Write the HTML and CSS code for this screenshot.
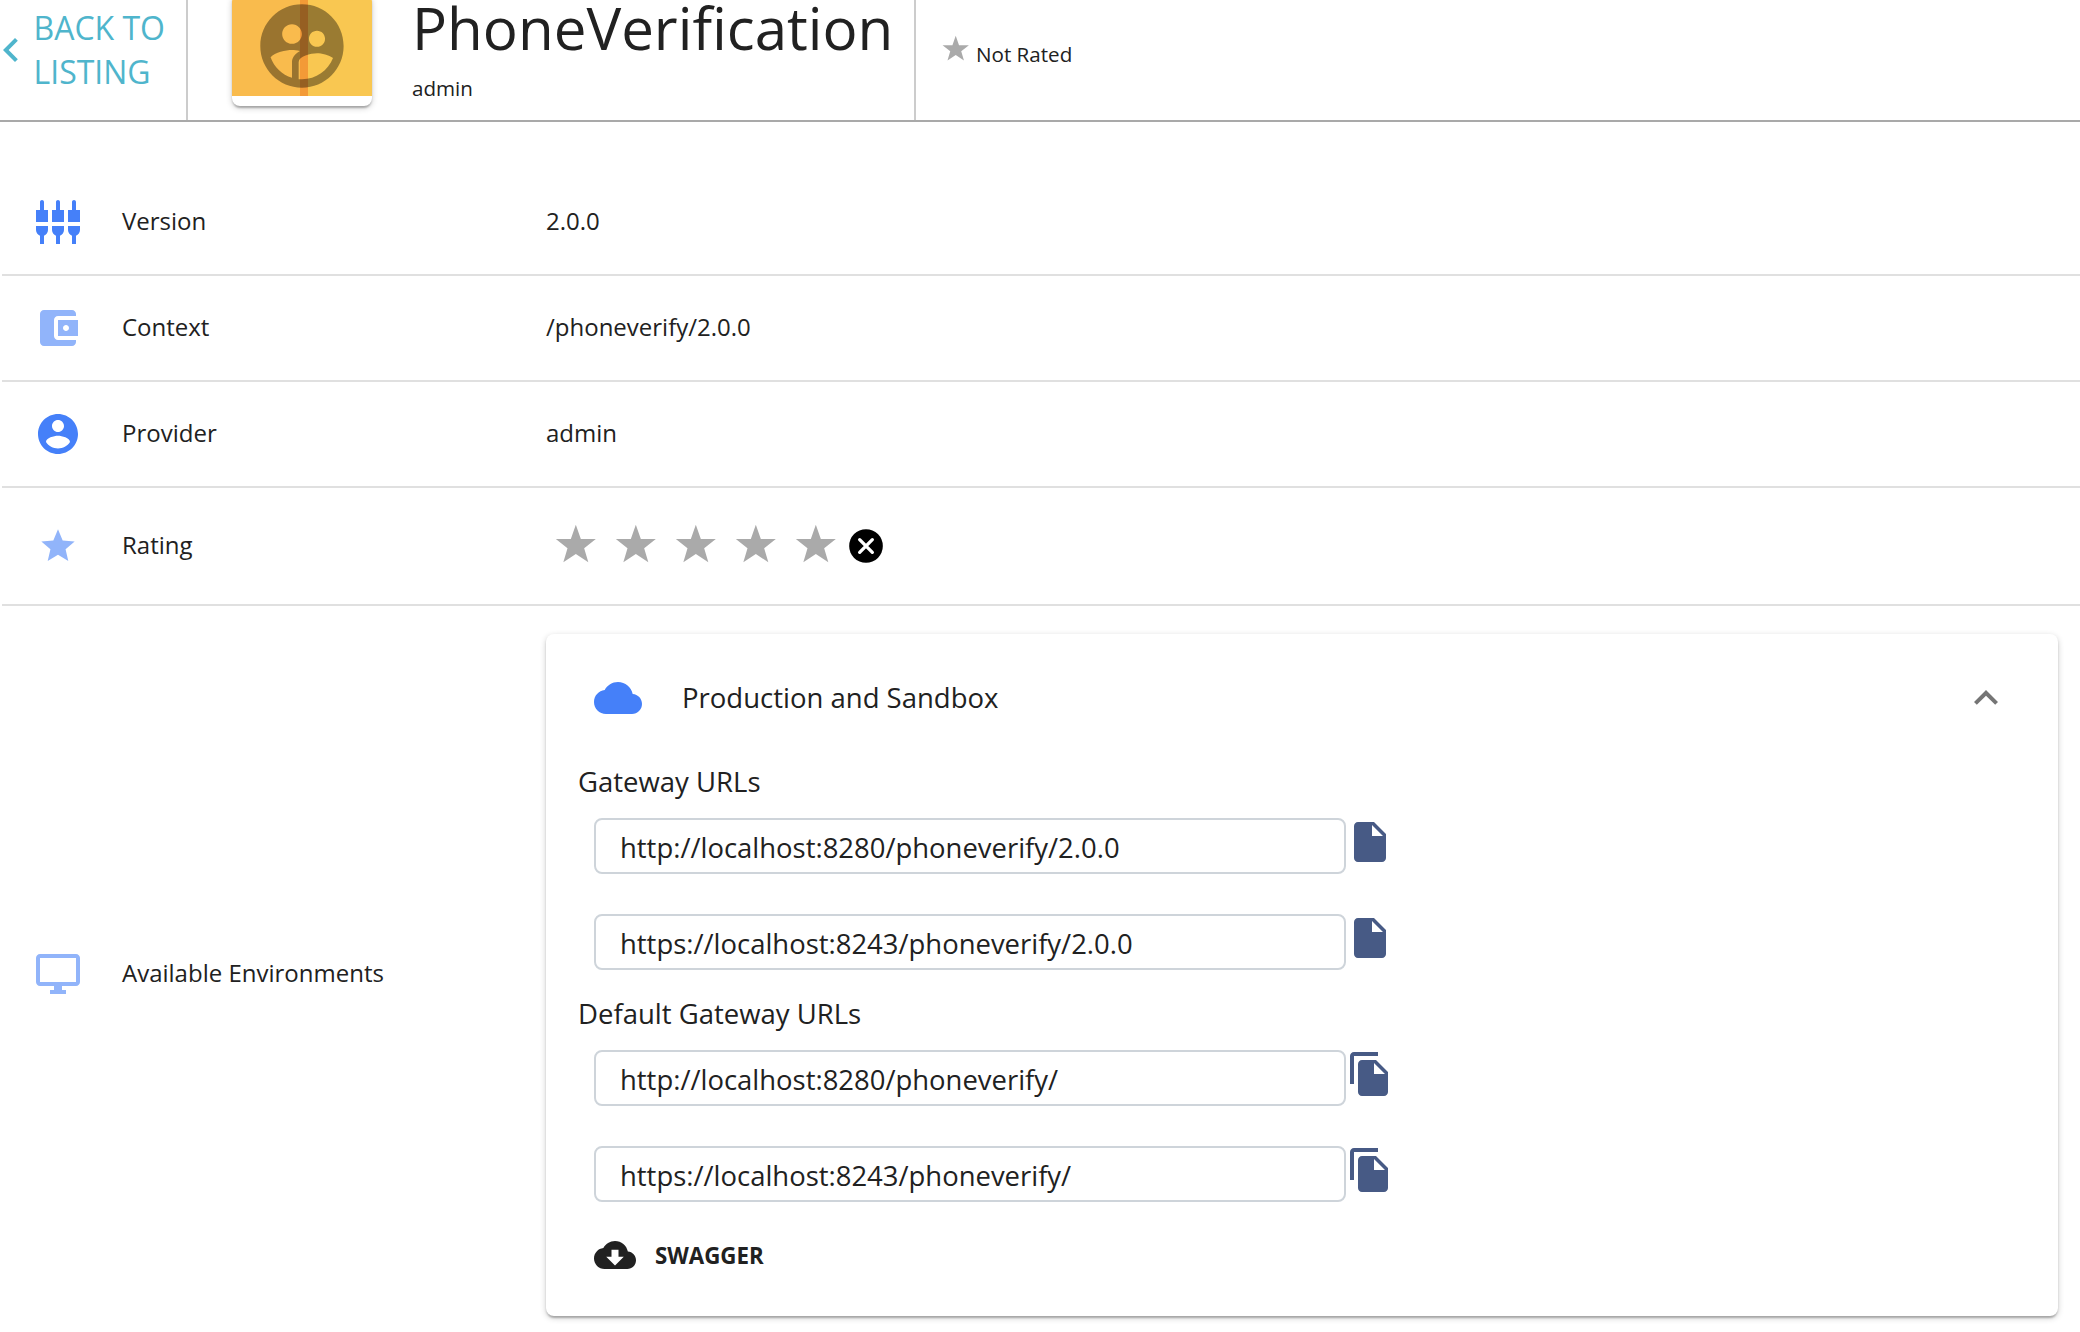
FILE: index.html
```html
<!DOCTYPE html>
<html lang="en">
<head>
<meta charset="utf-8">
<title>PhoneVerification</title>
<link rel="stylesheet" href="styles.css">
</head>
<body>
<svg class="defs" width="0" height="0">
  <symbol id="star" viewBox="0 0 51 48"><path d="m25,1 6,17h18l-14,11 5,17-15-10-15,10 5-17-14-11h18z"/></symbol>
  <symbol id="file" viewBox="0 0 24 24"><path d="M6 2c-1.1 0-1.99.9-1.99 2L4 20c0 1.1.89 2 1.99 2H18c1.1 0 2-.9 2-2V8l-6-6H6zm7 7V3.500L18.500 9H13z"/></symbol>
  <symbol id="copy" viewBox="0 0 24 24"><path d="M16 1H4c-1.100 0-2 .9-2 2v14h2V3h12V1zm-1 4l6 6v10c0 1.100-.9 2-2 2H7.990C6.890 23 6 22.100 6 21l.01-14c0-1.100.89-2 1.990-2h7zm-1 7h5.500L14 6.500V12z"/></symbol>
</svg>
<header class="header">
  <a class="back">
    <svg class="back-icon" viewBox="0 0 24 24"><path d="M15.410 16.090l-4.580-4.590 4.580-4.590L14 5.500l-6 6 6 6z"/></svg>
    <span class="back-text">BACK TO<br>LISTING</span>
  </a>
  <div class="summary">
    <div class="thumb">
      <div class="thumb-art">
        <svg class="thumb-icon" viewBox="0 0 24 24"><path d="M11.990 2c-5.520 0-10 4.480-10 10s4.480 10 10 10 10-4.480 10-10-4.480-10-10-10zm3.610 6.340c1.070 0 1.930.86 1.930 1.930 0 1.070-.86 1.930-1.930 1.930-1.070 0-1.930-.86-1.930-1.930-.01-1.070.86-1.930 1.930-1.930zm-6-1.580c1.300 0 2.360 1.060 2.360 2.360 0 1.300-1.060 2.360-2.360 2.360s-2.360-1.060-2.360-2.360c0-1.310 1.050-2.360 2.360-2.360zm0 9.130v3.750c-2.400-.75-4.300-2.600-5.140-4.960 1.050-1.120 3.670-1.690 5.140-1.690.53 0 1.200.08 1.900.22-1.640.87-1.900 2.020-1.900 2.680zM11.990 20c-.27 0-.53-.01-.79-.04v-4.070c0-1.420 2.940-2.130 4.400-2.130 1.070 0 2.920.39 3.840 1.150-1.170 2.970-4.060 5.090-7.450 5.090z"/></svg>
      </div>
    </div>
    <div class="names">
      <h1 class="title">PhoneVerification</h1>
      <div class="owner">admin</div>
    </div>
  </div>
  <div class="rated">
    <svg class="rated-star"><use href="#star"/></svg>
    <span class="rated-text">Not Rated</span>
  </div>
</header>
<main class="table">
  <div class="row">
    <svg class="icon" viewBox="0 0 24 24"><path d="M5 2c0-.55-.45-1-1-1s-1 .45-1 1v4H1v6h6V6H5V2zm4 14c0 1.300.84 2.400 2 2.820V23h2v-4.180c1.160-.41 2-1.510 2-2.820v-2H9v2zm-8 0c0 1.300.84 2.400 2 2.820V23h2v-4.180C6.160 18.400 7 17.300 7 16v-2H1v2zM21 6V2c0-.55-.45-1-1-1s-1 .45-1 1v4h-2v6h6V6h-2zm-8-4c0-.55-.45-1-1-1s-1 .45-1 1v4H9v6h6V6h-2V2zm4 14c0 1.300.84 2.400 2 2.820V23h2v-4.180c1.160-.41 2-1.510 2-2.820v-2h-6v2z"/></svg>
    <span class="text">Version</span>
    <span class="text">2.0.0</span>
  </div>
  <div class="row">
    <svg class="icon light" viewBox="0 0 24 24"><path d="M21 18v1c0 1.100-.9 2-2 2H5c-1.110 0-2-.9-2-2V5c0-1.100.89-2 2-2h14c1.100 0 2 .9 2 2v1h-9c-1.110 0-2 .9-2 2v8c0 1.100.89 2 2 2h9zm-9-2h10V8H12v8zm4-2.500c-.83 0-1.500-.67-1.500-1.500s.67-1.500 1.500-1.500 1.500.67 1.500 1.500-.67 1.500-1.500 1.500z"/></svg>
    <span class="text">Context</span>
    <span class="text">/phoneverify/2.0.0</span>
  </div>
  <div class="row">
    <svg class="icon" viewBox="0 0 24 24"><path d="M12 2C6.480 2 2 6.480 2 12s4.480 10 10 10 10-4.480 10-10S17.520 2 12 2zm0 3c1.660 0 3 1.340 3 3s-1.340 3-3 3-3-1.340-3-3 1.340-3 3-3zm0 14.200c-2.500 0-4.710-1.280-6-3.220.03-1.990 4-3.080 6-3.080 1.990 0 5.970 1.090 6 3.080-1.290 1.940-3.500 3.220-6 3.220z"/></svg>
    <span class="text">Provider</span>
    <span class="text">admin</span>
  </div>
  <div class="row row-rating">
    <svg class="icon light small" viewBox="0 0 24 24"><path d="M12 17.270L18.180 21l-1.640-7.030L22 9.240l-7.190-.61L12 2 9.190 8.630 2 9.240l5.460 4.730L5.820 21z"/></svg>
    <span class="text">Rating</span>
    <div class="stars">
      <svg class="star"><use href="#star"/></svg>
      <svg class="star"><use href="#star"/></svg>
      <svg class="star"><use href="#star"/></svg>
      <svg class="star"><use href="#star"/></svg>
      <svg class="star"><use href="#star"/></svg>
      <svg class="cancel" viewBox="0 0 24 24"><circle cx="12" cy="12" r="10.100"/><path d="M8.200 8.200l7.600 7.600M15.800 8.200l-7.600 7.600"/></svg>
    </div>
  </div>
  <div class="row row-env">
    <svg class="icon light" viewBox="0 0 24 24"><path d="M21 2H3c-1.100 0-2 .9-2 2v12c0 1.100.9 2 2 2h7v2H8v2h8v-2h-2v-2h7c1.100 0 2-.9 2-2V4c0-1.100-.9-2-2-2zm0 14H3V4h18v12z"/></svg>
    <span class="text">Available Environments</span>
    <section class="card">
      <div class="card-head">
        <svg class="cloud" viewBox="0 0 24 24"><path d="M19.350 10.040C18.670 6.590 15.640 4 12 4 9.110 4 6.600 5.640 5.350 8.040 2.340 8.360 0 10.910 0 14c0 3.310 2.690 6 6 6h13c2.760 0 5-2.240 5-5 0-2.640-2.050-4.780-4.650-4.960z"/></svg>
        <span class="env-name">Production and Sandbox</span>
        <svg class="collapse" viewBox="0 0 24 24"><path d="M12 8l-6 6 1.410 1.410L12 10.830l4.590 4.580L18 14z"/></svg>
      </div>
      <h2 class="group">Gateway URLs</h2>
      <div class="urls">
        <div class="url"><div class="box">http://localhost:8280/phoneverify/2.0.0</div><svg class="action"><use href="#file"/></svg></div>
        <div class="url"><div class="box">https://localhost:8243/phoneverify/2.0.0</div><svg class="action"><use href="#file"/></svg></div>
      </div>
      <h2 class="group">Default Gateway URLs</h2>
      <div class="urls">
        <div class="url"><div class="box">http://localhost:8280/phoneverify/</div><svg class="action"><use href="#copy"/></svg></div>
        <div class="url"><div class="box">https://localhost:8243/phoneverify/</div><svg class="action"><use href="#copy"/></svg></div>
      </div>
      <a class="swagger">
        <svg class="download" viewBox="0 0 24 24"><path d="M19.350 10.040C18.670 6.590 15.640 4 12 4 9.110 4 6.600 5.640 5.350 8.040 2.340 8.360 0 10.910 0 14c0 3.310 2.690 6 6 6h13c2.760 0 5-2.240 5-5 0-2.640-2.050-4.780-4.650-4.960zM17 13l-5 5-5-5h3V9h4v4h3z"/></svg>
        <span class="swagger-text">SWAGGER</span>
      </a>
    </section>
  </div>
</main>
</body>
</html>
```
FILE: styles.css
```css
* { box-sizing: border-box; }
body {
  margin: 0;
  height: 1332px;
  overflow: hidden;
  background: #fff;
  color: #212121;
  font-family: "Open Sans", sans-serif;
  font-size: 24px;
}
svg { display: block; flex: none; }
.defs { position: absolute; }

.header {
  display: flex;
  height: 122px;
  border-bottom: 2px solid #a9a9a9;
}
.back {
  display: flex;
  width: 188px;
  flex: none;
  border-right: 2px solid #ccc;
  color: #4fb5cc;
}
.back-icon { width: 48px; height: 48px; margin: 27px -1px 0 -13.500px; fill: #4fb5cc; }
.back-text { font-size: 32px; line-height: 44px; padding-top: 6px; white-space: nowrap; }
.summary {
  display: flex;
  width: 728px;
  flex: none;
  border-right: 2px solid #ccc;
}
.thumb {
  width: 140px;
  height: 112px;
  margin: -6px 40px 0 44px;
  flex: none;
  border-radius: 8px;
  overflow: hidden;
  box-shadow: 0 2px 6px rgba(0,0,0,.2), 0 2px 2px rgba(0,0,0,.14), 0 4px 2px -2px rgba(0,0,0,.12);
}
.thumb-art {
  height: 102px;
  overflow: hidden;
  background: linear-gradient(to right, #f9bb4d 68px, #f39a37 68px 76px, #f9c751 76px);
}
.thumb-icon { width: 100px; height: 100px; margin: 2px 0 0 20px; fill: rgba(0,0,0,.38); }
.names { display: flex; flex-direction: column; }
.title { margin: 0; font-size: 58.300px; font-weight: 400; line-height: 56px; white-space: nowrap; }
.owner { font-size: 20.600px; line-height: 30px; margin-top: 17px; }
.rated { display: flex; padding-left: 26px; }
.rated-star { width: 28px; height: 27px; margin: 35px 6px 0 0; fill: #aaa; }
.rated-text { font-size: 20.600px; line-height: 30px; padding-top: 39px; }

.table { margin: 48px 0 0 2px; }
.row {
  display: grid;
  grid-template-columns: 88px 424px 1fr;
  align-items: center;
  height: 106px;
  padding-left: 32px;
  border-bottom: 2px solid #e0e0e0;
}
.row-rating { height: 118px; }
.row-env { height: 736px; border: 0; }
.icon { width: 48px; height: 48px; fill: #4580f9; }
.light { fill: #91b4fa; }
.small { width: 40px; height: 40px; margin-left: 4px; }
.text { line-height: 32px; padding-bottom: 2px; }

.stars { display: flex; align-items: center; gap: 17.500px; padding-left: 9px; }
.star { width: 42.500px; height: 40px; margin-top: -4px; fill: #aaa; }
.cancel { width: 40px; height: 40px; margin-left: -9px; fill: #000; }
.cancel path { stroke: #fff; stroke-width: 2px; stroke-linecap: round; }

.card {
  height: 682px;
  width: 1512px;
  margin-top: 2px;
  padding: 40px 48px 0;
  border-radius: 8px;
  box-shadow: 0 2px 6px rgba(0,0,0,.2), 0 2px 2px rgba(0,0,0,.14), 0 4px 2px -2px rgba(0,0,0,.12);
}
.card-head { display: flex; align-items: center; height: 48px; }
.cloud { width: 48px; height: 48px; fill: #4580f9; }
.env-name { margin-left: 40px; padding-bottom: 2px; font-size: 27.500px; }
.collapse { width: 48px; height: 48px; margin-left: auto; fill: #757575; }
.group { margin: 0 0 0 -16px; font-size: 27.500px; font-weight: 400; line-height: 40px; }
.card-head + .group { padding-top: 40px; }
.urls { display: flex; flex-direction: column; gap: 40px; margin: 16px 0 24px; }
.url { display: flex; }
.box {
  width: 752px;
  height: 56px;
  padding: 3px 24px 0;
  border: 2px solid #ced4da;
  border-radius: 8px;
  font-size: 27.450px;
  line-height: 50px;
}
.action { width: 48px; height: 48px; fill: #475a85; }
.swagger { display: flex; align-items: center; gap: 19px; margin-top: 32px; font-size: 22.300px; font-weight: 700; }
.swagger-text { padding-bottom: 0; }
.download { width: 42px; height: 42px; fill: #212121; }
```
